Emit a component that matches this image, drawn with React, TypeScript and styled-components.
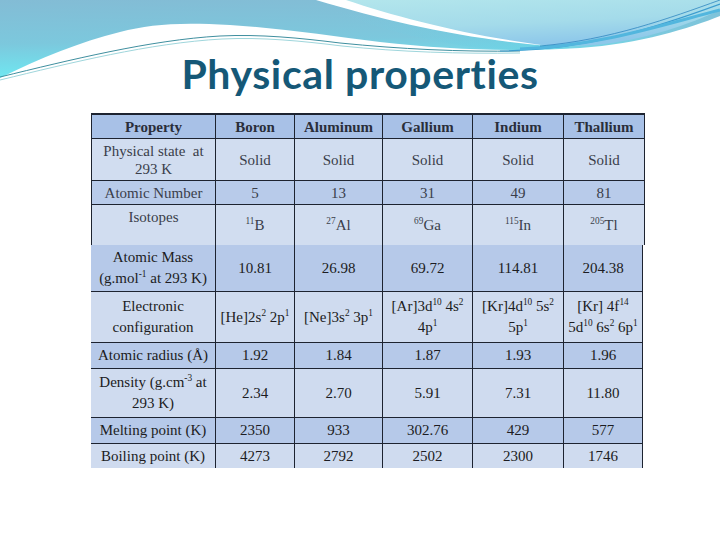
import React from "react";
import styled, { createGlobalStyle } from "styled-components";

const GlobalStyle = createGlobalStyle`
  html, body { margin: 0; padding: 0; background: #ffffff; }
  * { box-sizing: border-box; }
`;

const Slide = styled.div`
  position: relative;
  width: 720px;
  height: 540px;
  overflow: hidden;
  padding-top: 50px;
  background: #ffffff;
`;

const Wave = styled.svg`
  position: absolute;
  top: 0;
  left: 0;
  width: 720px;
  height: 110px;
`;

const Title = styled.h1`
  position: relative;
  margin: 0;
  text-align: center;
  font-family: Lato, "Open Sans", sans-serif;
  font-weight: 700;
  font-size: 41px;
  line-height: 48px;
  letter-spacing: 0.6px;
  color: #155877;
`;

const Tables = styled.div`
  position: relative;
  margin: 15px 0 0 91px;
  display: flex;
  flex-direction: column;
  align-items: flex-start;
`;

type Variant = "top" | "bottom";

const Grid = styled.div<{ $variant: Variant }>`
  display: grid;
  gap: 1px;
  background: #1d2330;
  padding: ${(p) => (p.$variant === "top" ? "2px 1px 0 1px" : "0 1px 0 0")};
  grid-template-columns: ${(p) =>
    p.$variant === "top"
      ? "123px 78px 87px 89px 90px 80px"
      : "124px 78px 87px 89px 90px 78px"};
  grid-template-rows: ${(p) =>
    p.$variant === "top" ? "23px 41px 23px 40px" : "46px 50px 25px 48px 25px 24px"};
  font-family: "Liberation Serif", "Times New Roman", serif;
  font-size: 15px;
  line-height: ${(p) => (p.$variant === "top" ? "18px" : "21px")};
  color: ${(p) => (p.$variant === "top" ? "#3a3e4a" : "#1c1c22")};
`;

type Tone = "header" | "dark" | "light" | "dark2" | "light2";

const toneColor: Record<Tone, string> = {
  header: "#a8c1e7",
  dark: "#b8cbea",
  light: "#d1ddf0",
  dark2: "#b6c9e9",
  light2: "#cfdbef",
};

const Cell = styled.div<{ $tone: Tone; $top?: boolean; $bold?: boolean }>`
  background: ${(p) => toneColor[p.$tone]};
  display: flex;
  align-items: ${(p) => (p.$top ? "flex-start" : "center")};
  justify-content: center;
  text-align: center;
  white-space: nowrap;
  padding-top: ${(p) => (p.$top ? "3px" : "0")};
  font-weight: ${(p) => (p.$bold ? 700 : 400)};
  color: ${(p) => (p.$bold ? "#2a2e3a" : "inherit")};
`;

const Sup = styled.sup`
  font-size: 0.62em;
  line-height: 0;
  vertical-align: super;
`;

type Row = { tone: Tone; cells: React.ReactNode[]; bold?: boolean; topLabel?: boolean };

const solid = ["Solid", "Solid", "Solid", "Solid", "Solid"];

const topRows: Row[] = [
  {
    tone: "header",
    bold: true,
    cells: ["Property", "Boron", "Aluminum", "Gallium", "Indium", "Thallium"],
  },
  {
    tone: "light",
    cells: [
      <>
        Physical state&nbsp; at
        <br />
        293 K
      </>,
      ...solid,
    ],
  },
  { tone: "dark", cells: ["Atomic Number", "5", "13", "31", "49", "81"] },
  {
    tone: "light",
    topLabel: true,
    cells: [
      "Isotopes",
      <>
        <Sup>11</Sup>B
      </>,
      <>
        <Sup>27</Sup>Al
      </>,
      <>
        <Sup>69</Sup>Ga
      </>,
      <>
        <Sup>115</Sup>In
      </>,
      <>
        <Sup>205</Sup>Tl
      </>,
    ],
  },
];

const bottomRows: Row[] = [
  {
    tone: "dark2",
    cells: [
      <>
        Atomic Mass
        <br />
        (g.mol<Sup>-1</Sup> at 293 K)
      </>,
      "10.81",
      "26.98",
      "69.72",
      "114.81",
      "204.38",
    ],
  },
  {
    tone: "light2",
    cells: [
      <>
        Electronic
        <br />
        configuration
      </>,
      <>
        [He]2s<Sup>2</Sup> 2p<Sup>1</Sup>
      </>,
      <>
        [Ne]3s<Sup>2</Sup> 3p<Sup>1</Sup>
      </>,
      <>
        [Ar]3d<Sup>10</Sup> 4s<Sup>2</Sup>
        <br />
        4p<Sup>1</Sup>
      </>,
      <>
        [Kr]4d<Sup>10</Sup> 5s<Sup>2</Sup>
        <br />
        5p<Sup>1</Sup>
      </>,
      <>
        [Kr] 4f<Sup>14</Sup>
        <br />
        5d<Sup>10</Sup> 6s<Sup>2</Sup> 6p<Sup>1</Sup>
      </>,
    ],
  },
  { tone: "dark2", cells: ["Atomic radius (Å)", "1.92", "1.84", "1.87", "1.93", "1.96"] },
  {
    tone: "light2",
    cells: [
      <>
        Density (g.cm<Sup>-3</Sup> at
        <br />
        293 K)
      </>,
      "2.34",
      "2.70",
      "5.91",
      "7.31",
      "11.80",
    ],
  },
  { tone: "dark2", cells: ["Melting point (K)", "2350", "933", "302.76", "429", "577"] },
  { tone: "light2", cells: ["Boiling point (K)", "4273", "2792", "2502", "2300", "1746"] },
];

function TableBlock({ rows, variant }: { rows: Row[]; variant: Variant }) {
  return (
    <Grid $variant={variant}>
      {rows.map((row, r) =>
        row.cells.map((c, i) => (
          <Cell
            key={`${r}-${i}`}
            $tone={row.tone}
            $bold={row.bold}
            $top={row.topLabel && i === 0}
          >
            <span>{c}</span>
          </Cell>
        ))
      )}
    </Grid>
  );
}

function WaveArt() {
  return (
    <Wave viewBox="0 0 720 110" aria-hidden="true">
      <defs>
        <linearGradient id="band" x1="0" y1="0" x2="0.15" y2="1">
          <stop offset="0" stopColor="#83bcd5" />
          <stop offset="0.55" stopColor="#7cc8dd" />
          <stop offset="1" stopColor="#6ee9f2" />
        </linearGradient>
        <linearGradient id="bandRight" x1="0" y1="0" x2="1" y2="0">
          <stop offset="0" stopColor="#7cc9de" stopOpacity="0" />
          <stop offset="1" stopColor="#62d3e6" stopOpacity="0.7" />
        </linearGradient>
        <linearGradient id="sky" x1="0" y1="0" x2="0.4" y2="1">
          <stop offset="0" stopColor="#b3e6ec" />
          <stop offset="0.6" stopColor="#a4dbea" />
          <stop offset="1" stopColor="#8ec8ea" />
        </linearGradient>
      </defs>
      <path
        d="M0,0 L720,0 L720,16 C690,28 640,44 580,48 C520,52 450,50 380,42 C330,36 280,28 230,25 C180,22 150,24 120,32 C80,42 40,58 0,78 Z"
        fill="url(#band)"
      />
      <path
        d="M330,10 C380,30 430,42 480,48 C510,50 540,50 570,48 L560,40 C500,34 420,26 330,10 Z"
        fill="url(#bandRight)"
      />
      <path
        d="M330,0 C385,16 445,32 505,41 C535,45 565,47 595,45 C645,40 690,24 720,10 L720,0 Z"
        fill="url(#sky)"
      />
      <path d="M316,0 C390,22 460,38 548,46 C465,35 400,18 346,0 Z" fill="#ffffff" />
      <path
        d="M0,77 C70,60 150,40 220,36 C260,34 300,38 340,43 C400,49 460,52 520,51"
        fill="none"
        stroke="#3f8f9f"
        strokeWidth="1"
      />
      <path
        d="M0,80 C70,63 150,43 222,39 C262,37 302,41 342,46 C400,52 460,54 520,53"
        fill="none"
        stroke="#9fd6dc"
        strokeWidth="1"
      />
      <path
        d="M500,51 C590,50 660,26 720,4"
        fill="none"
        stroke="#3b9ccf"
        strokeWidth="1.2"
      />
      <path
        d="M520,49 C600,46 665,24 720,10"
        fill="none"
        stroke="#52b6de"
        strokeWidth="3"
      />
      <path
        d="M540,46 C610,40 670,18 720,0"
        fill="none"
        stroke="#2f86c0"
        strokeWidth="0.8"
      />
    </Wave>
  );
}

export default function App() {
  return (
    <>
      <GlobalStyle />
      <Slide>
        <WaveArt />
        <Title>Physical properties</Title>
        <Tables>
          <TableBlock rows={topRows} variant="top" />
          <TableBlock rows={bottomRows} variant="bottom" />
        </Tables>
      </Slide>
    </>
  );
}
